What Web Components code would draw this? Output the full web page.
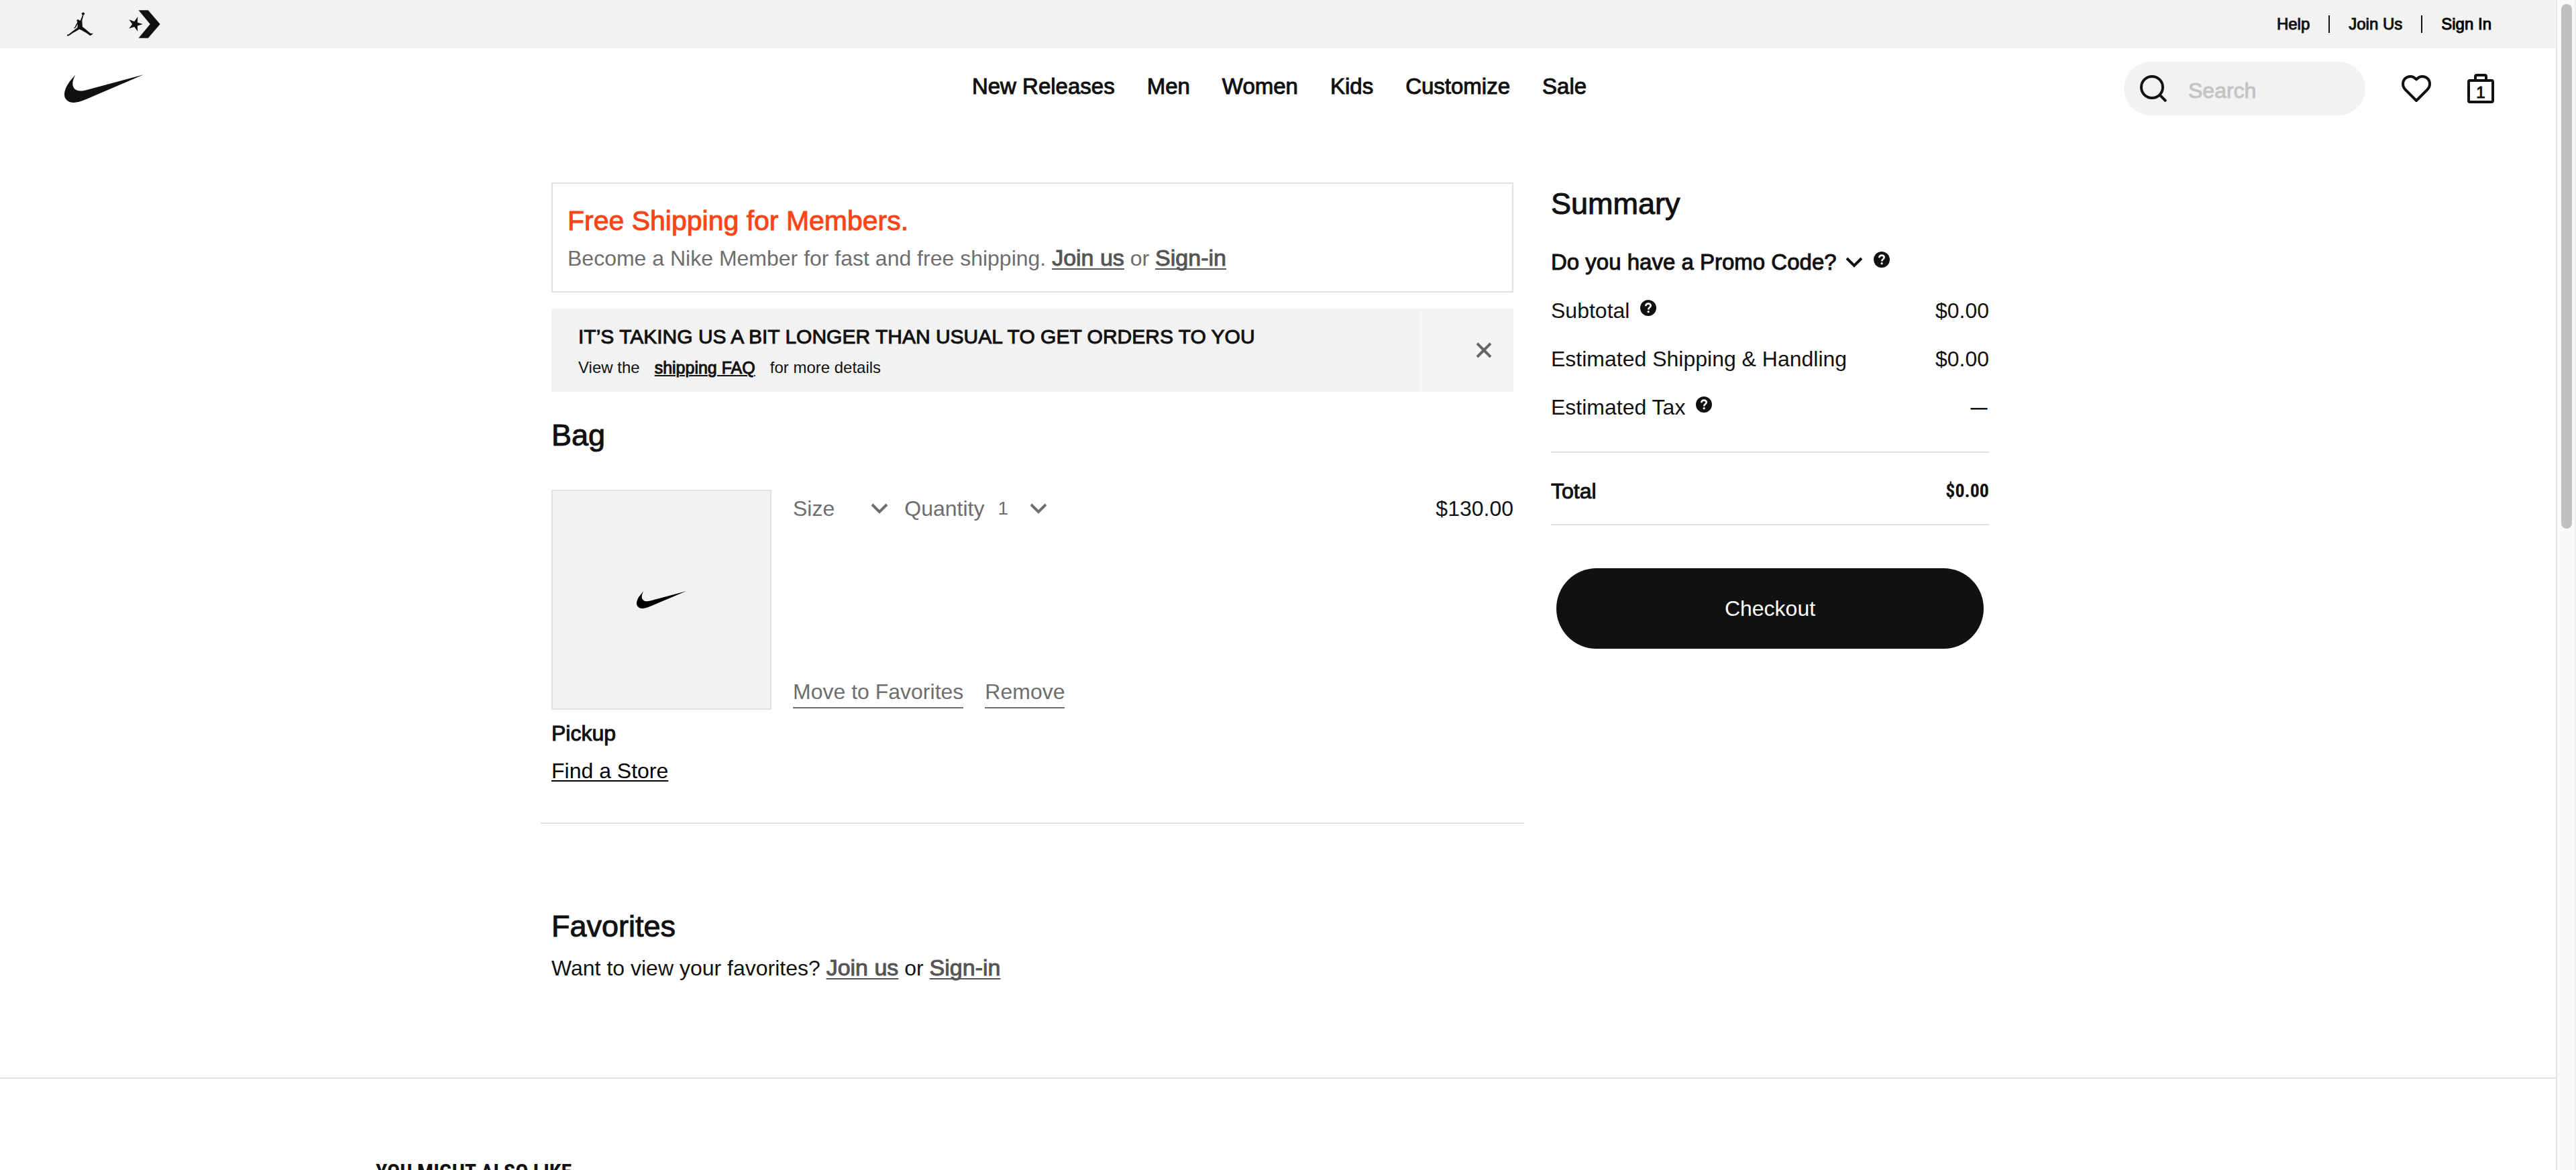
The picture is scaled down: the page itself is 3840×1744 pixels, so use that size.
<!DOCTYPE html>
<html lang="en">
<head>
<meta charset="utf-8">
<title>Nike Bag</title>
<style>
  html, body { margin: 0; height: 100%; }
  body { background: #fff; color: #111; font: 32px/56px "Liberation Sans", Arial, Helvetica, sans-serif; overflow: hidden; }
</style>
</head>
<body>
<bag-app></bag-app>
<script>
const shared = `
  *, *::before, *::after { box-sizing: border-box; }
  h1, h2, h3, p, dl, dd, dt { margin: 0; font-size: inherit; font-weight: 400; }
  a { color: inherit; text-decoration: none; }
  button { font: inherit; color: inherit; background: none; border: 0; padding: 0; cursor: pointer; }
  svg { display: block; }
  .medium { -webkit-text-stroke: 1px currentColor; }
  .member { color: #555; font-size: 34px; line-height: 40px; -webkit-text-stroke: 1px currentColor; text-decoration: underline 2px; text-underline-offset: 4px; text-decoration-skip-ink: none; }
  h2 { font-size: 45px; line-height: 56px; -webkit-text-stroke: 1px currentColor; }
`;
function define(name, css, html) {
  customElements.define(name, class extends HTMLElement {
    constructor() {
      super();
      this.attachShadow({ mode: 'open' }).innerHTML = `<style>${shared}${css}</style>${html}`;
    }
  });
}

const icons = {
  swoosh: ['3 8.7 18 6.3', '<path fill="currentColor" d="M21 8.719L7.836 14.303C6.74 14.768 5.818 15 5.075 15c-.836 0-1.445-.295-1.819-.884-.485-.76-.273-1.982.559-3.272.494-.754 1.122-1.446 1.734-2.108-.144.234-1.415 2.349-.025 3.345.275.2.666.298 1.147.298.386 0 .829-.063 1.316-.19L21 8.719z"/>'],
  jordan: ['120 52 117 111', '<g fill="currentColor"><circle cx="192" cy="60" r="6.5"/><path d="M189 65l4 1-1 6-5 19 1 12 1 17 12 9 20 18 6 4 9-2-2 4-7 6-6 1-3-4-14-9-18-11-12-5-6 4-20 12-19 13-7 2-3-3 3-4 6-1 12-10 26-20 1-11 1-6-6 8-3 8-6 4-4-1 5-4 5-11 6-10 1-4-3-4 2-6 5-1 4 3 5 2 4-9z"/></g>'],
  converse: ['396 45 142 126', '<path fill="currentColor" d="M440 46h43l54 62-54 62h-43l52-62zM459 108l-24 7.700 1 24.800-15-20.200-24 7.500 14.500-19.800L397 88l24 7.700L436 75l-1 25.300z"/>'],
  search: ['0 0 40 40', '<g fill="none" stroke="currentColor" stroke-width="4"><circle cx="18" cy="18" r="16"/><path d="M29 29l10 10"/></g>'],
  heart: ['0 0 44 40', '<path fill="none" stroke="currentColor" stroke-width="4" stroke-linejoin="round" d="M22 6.500C25 3 28 2 31 2c6.500 0 11 5 11 11 0 4-1.500 6.500-4 9L22 38 6 22c-2.500-2.500-4-5-4-9C2 7 6.500 2 13 2c3 0 6 1 9 4.500z"/>'],
  bag: ['0 0 40 44', '<path fill="none" stroke="currentColor" stroke-width="4" d="M12 10V4q0-2 2-2h12q2 0 2 2v6M4 10h32q2 0 2 2v28q0 2-2 2H4q-2 0-2-2V12q0-2 2-2z"/>'],
  chevron: ['0 0 26 16', '<path fill="none" stroke="currentColor" stroke-width="4" d="M2 2l11 11L24 2"/>'],
  close: ['0 0 24 24', '<path fill="none" stroke="currentColor" stroke-width="4" d="M2 2l20 20M22 2L2 22"/>'],
  help: ['0 0 24 24', '<circle cx="12" cy="12" r="12" fill="currentColor"/><path fill="none" stroke="#fff" stroke-width="2.600" d="M8.300 9.300c0-2.500 1.600-3.700 3.700-3.700s3.700 1.200 3.700 3.200c0 2.600-3.500 2.500-3.500 5.700"/><circle cx="12.200" cy="17.700" r="1.600" fill="#fff"/>']
};
customElements.define('ui-icon', class extends HTMLElement {
  constructor() { super(); this.attachShadow({ mode: 'open' }); }
  connectedCallback() {
    const [box, body] = icons[this.getAttribute('name')];
    this.shadowRoot.innerHTML = `<style>:host{display:block;flex:none}svg{display:block;width:100%;height:100%}</style><svg viewBox="${box}" preserveAspectRatio="none" aria-hidden="true">${body}</svg>`;
  }
});

define('brand-bar', `
  :host { display: flex; justify-content: space-between; align-items: center; height: 72px; padding: 0 96px 0 100px; background: #f2f2f2; font-size: 24px; line-height: 32px; }
  .brands, nav { display: flex; align-items: center; }
  .brands { gap: 53px; }
  nav { gap: 28px; }
  nav span { width: 2px; height: 26px; background: #111; }
  .jordan { width: 39px; height: 36px; }
  .converse { width: 47px; height: 42px; }
  .sign { color: #000; }
`, `
  <div class="brands">
    <a href="#" aria-label="Jordan"><ui-icon class="jordan" name="jordan"></ui-icon></a>
    <a href="#" aria-label="Converse"><ui-icon class="converse" name="converse"></ui-icon></a>
  </div>
  <nav class="medium"><a href="#">Help</a><span></span><a href="#">Join Us</a><span></span><a href="#" class="sign">Sign In</a></nav>
`);

define('site-header', `
  :host { display: grid; grid-template-columns: 1fr auto 1fr; align-items: center; height: 120px; padding: 0 92px 0 96px; }
  .logo { justify-self: start; }
  .logo ui-icon { width: 118px; height: 42px; }
  nav { display: flex; gap: 48px; padding-bottom: 6px; font-size: 33px; }
  .tools { display: flex; align-items: center; justify-self: end; }
  .search { display: flex; align-items: center; gap: 32px; width: 360px; height: 80px; padding: 0 24px; border-radius: 40px; background: #f2f2f2; }
  .search ui-icon { width: 40px; height: 40px; }
  input { flex: 1; min-width: 0; height: 80px; border: 0; padding: 6px 0 0; background: none; font: inherit; outline: 0; color: #111; }
  input::placeholder { color: #c4c4c4; opacity: 1; -webkit-text-stroke: 1px #c4c4c4; }
  .heart { margin-left: 54px; }
  .heart ui-icon { width: 44px; height: 40px; }
  .bag { display: grid; place-items: center; margin-left: 54px; font-size: 24px; line-height: 24px; }
  .bag > * { grid-area: 1 / 1; }
  .bag ui-icon { width: 40px; height: 44px; }
  .bag span { padding-top: 12px; }
`, `
  <a class="logo" href="#" aria-label="Nike"><ui-icon name="swoosh"></ui-icon></a>
  <nav class="medium"><a href="#">New Releases</a><a href="#">Men</a><a href="#">Women</a><a href="#">Kids</a><a href="#">Customize</a><a href="#">Sale</a></nav>
  <div class="tools">
    <label class="search"><ui-icon name="search"></ui-icon><input type="text" placeholder="Search" aria-label="Search"></label>
    <a class="heart" href="#" aria-label="Favorites"><ui-icon name="heart"></ui-icon></a>
    <a class="bag" href="#" aria-label="Bag items"><ui-icon name="bag"></ui-icon><span class="medium">1</span></a>
  </div>
`);

define('member-offer', `
  :host { display: block; border: 2px solid #e1e1e1; padding: 27px 22px 21px; }
  h3 { font-size: 41px; line-height: 56px; color: #fa4616; }
  p { color: #6e6e6e; }
`, `
  <h3 class="medium">Free Shipping for Members.</h3>
  <p>Become a Nike Member for fast and free shipping. <a class="member" href="#">Join us</a> or <a class="member" href="#">Sign-in</a></p>
`);

define('delay-alert', `
  :host { display: flex; background: #f2f2f2; }
  .body { flex: 1; padding: 20px 40px 12px; }
  h3 { font-size: 30px; line-height: 44px; }
  p { display: flex; gap: 22px; font-size: 24px; line-height: 48px; }
  a { font-size: 25px; text-decoration: underline 2px; text-underline-offset: 2px; }
  button { width: 140px; display: flex; align-items: center; justify-content: flex-end; padding-right: 32px; background: #f5f5f5; color: #666; }
  ui-icon { width: 24px; height: 24px; }
`, `
  <div class="body">
    <h3 class="medium">IT’S TAKING US A BIT LONGER THAN USUAL TO GET ORDERS TO YOU</h3>
    <p><span>View the</span><a class="medium" href="#">shipping FAQ</a><span>for more details</span></p>
  </div>
  <button type="button" aria-label="Close"><ui-icon name="close"></ui-icon></button>
`);

customElements.define('option-picker', class extends HTMLElement {
  constructor() {
    super();
    this.attachShadow({ mode: 'open' }).innerHTML = `<style>${shared}
      :host { display: flex; align-items: center; width: max-content; line-height: 40px; }
      label { display: flex; align-items: center; }
      .field { display: grid; align-items: center; width: var(--field, 80px); }
      .field > * { grid-area: 1 / 1; }
      select { appearance: none; width: 100%; height: 40px; border: 0; background: none; padding: 0 0 0 20px; font: 28px/40px "Liberation Sans", Arial, sans-serif; color: inherit; }
      ui-icon { justify-self: end; width: 26px; height: 16px; pointer-events: none; }
    </style><label><slot></slot><span class="field"><select></select><ui-icon name="chevron"></ui-icon></span></label>`;
  }
  connectedCallback() {
    const value = this.getAttribute('value');
    if (value) this.shadowRoot.querySelector('select').add(new Option(value));
  }
});

define('bag-item', `
  :host { display: block; }
  .top { display: flex; gap: 32px; }
  .photo { display: grid; place-items: center; flex: none; width: 328px; height: 328px; border: 2px solid #e1e1e1; background: #f2f2f2; color: #000; }
  .photo ui-icon { width: 74px; height: 26px; }
  .details { flex: 1; display: flex; flex-direction: column; justify-content: space-between; padding: 8px 0 2px; }
  .row { display: flex; gap: 24px; color: #6e6e6e; line-height: 40px; }
  .price { margin-left: auto; color: #111; }
  .quantity { --field: 94px; }
  .actions { display: flex; gap: 32px; color: #6e6e6e; line-height: 46px; }
  .actions button { border-bottom: 2px solid #6e6e6e; }
  .pickup { padding-top: 7px; }
  .pickup a { color: #000; text-decoration: underline 2px; text-underline-offset: 3px; }
`, `
  <div class="top">
    <div class="photo"><ui-icon name="swoosh"></ui-icon></div>
    <div class="details">
      <div class="row">
        <option-picker>Size</option-picker>
        <option-picker class="quantity" value="1">Quantity</option-picker>
        <span class="price">$130.00</span>
      </div>
      <div class="actions"><button type="button">Move to Favorites</button><button type="button">Remove</button></div>
    </div>
  </div>
  <div class="pickup">
    <h3 class="medium">Pickup</h3>
    <p><a href="#">Find a Store</a></p>
  </div>
`);

define('order-summary', `
  :host { display: block; }
  h2 { line-height: 64px; padding-bottom: 19px; box-sizing: content-box; }
  .row { display: flex; justify-content: space-between; align-items: center; height: 72px; }
  .name { display: flex; align-items: center; gap: 16px; }
  .name ui-icon[name=help] { width: 24px; height: 24px; margin-bottom: 8px; }
  .promo button { display: flex; align-items: center; gap: 13px; font-size: 33px; }
  .promo button ui-icon { width: 26px; height: 16px; }
  .dash { font-size: 24px; padding-right: 3px; }
  .total { height: 110px; margin-top: 30px; padding-top: 8px; border: solid #e1e1e1; border-width: 2px 0; }
  .total dd { font: 700 28px/56px "Liberation Sans Narrow", "Roboto Condensed", "Liberation Sans", sans-serif; }
  .checkout { display: block; width: calc(100% - 16px); height: 120px; margin: 64px 8px 0; border-radius: 60px; background: #111; color: #fff; }
`, `
  <h2>Summary</h2>
  <div class="row promo"><div class="name"><button type="button" class="medium">Do you have a Promo Code?<ui-icon name="chevron"></ui-icon></button><ui-icon name="help"></ui-icon></div></div>
  <dl>
    <div class="row"><dt class="name">Subtotal<ui-icon name="help"></ui-icon></dt><dd>$0.00</dd></div>
    <div class="row"><dt>Estimated Shipping &amp; Handling</dt><dd>$0.00</dd></div>
    <div class="row"><dt class="name">Estimated Tax<ui-icon name="help"></ui-icon></dt><dd class="dash medium">—</dd></div>
    <div class="row total"><dt class="medium">Total</dt><dd>$0.00</dd></div>
  </dl>
  <button class="checkout" type="button">Checkout</button>
`);

define('page-scrollbar', `
  :host { display: block; width: 30px; height: 100%; padding: 6px 4px 0 6px; background: #fafafa; border-left: 2px solid #e6e6e6; border-right: 2px solid #f0f0f0; }
  div { width: 16px; height: 45%; border-radius: 8px; background: #c1c1c1; }
`, `<div></div>`);

define('bag-app', `
  :host { display: grid; grid-template-columns: 1fr 30px; height: 100vh; overflow: hidden; }
  .page { min-width: 0; height: 100vh; overflow: hidden; }
  main { display: grid; grid-template-columns: 2fr 1fr; align-items: start; width: 100%; max-width: 2200px; margin: 0 auto; padding: 80px 0 0 1px; }
  .left > * { margin-left: 16px; margin-right: 16px; }
  delay-alert { margin-top: 24px; }
  .bag { margin-top: 37px; margin-bottom: 53px; }
  .left hr { margin: 49px 0 0; }
  hr { border: 0; height: 2px; margin: 0; background: #e1e1e1; }
  .favorites { padding: 125px 0 135px; }
  .favorites p { padding-top: 6px; }
  order-summary { margin: 0 40px; }
  .also { padding: 118px 560px 0; font: 700 32px/40px "Liberation Sans Narrow", "Roboto Condensed", "Liberation Sans", sans-serif; }
`, `
  <div class="page">
    <brand-bar></brand-bar>
    <site-header></site-header>
    <main>
      <div class="left">
        <member-offer></member-offer>
        <delay-alert></delay-alert>
        <h2 class="bag">Bag</h2>
        <bag-item></bag-item>
        <hr>
        <section class="favorites">
          <h2>Favorites</h2>
          <p>Want to view your favorites? <a class="member" href="#">Join us</a> or <a class="member" href="#">Sign-in</a></p>
        </section>
      </div>
      <order-summary></order-summary>
    </main>
    <hr>
    <h3 class="also">YOU MIGHT ALSO LIKE</h3>
  </div>
  <page-scrollbar></page-scrollbar>
`);
</script>
</body>
</html>
